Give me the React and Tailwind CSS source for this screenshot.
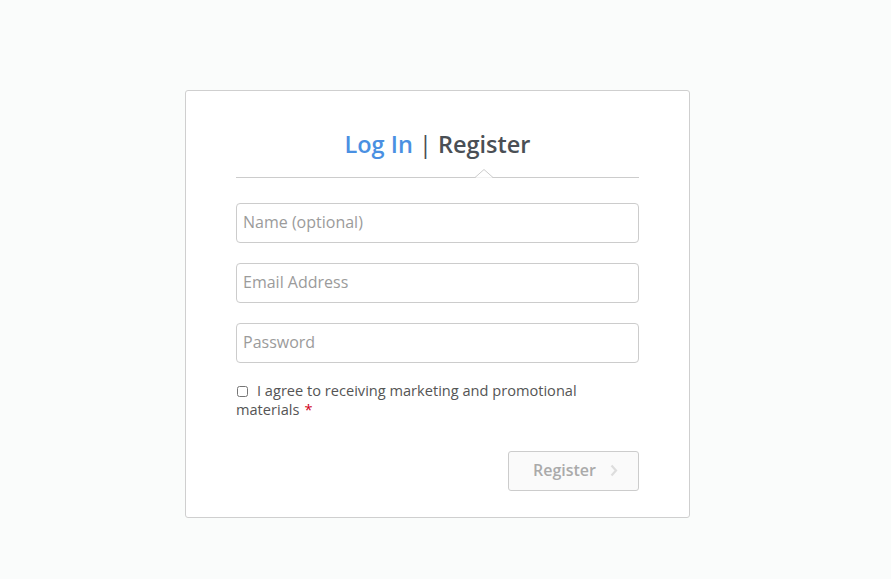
import React from "react";

const font = { fontFamily: "'Open Sans', Lato, sans-serif" };

function Field({ placeholder, type = "text" }) {
  return (
    <input
      type={type}
      placeholder={placeholder}
      className="h-[40px] w-full rounded-[4px] border border-[#cccccc] bg-white px-[6px] pb-[2px] text-[16px] text-[#555] placeholder:text-[#9b9b9b] outline-none"
      style={font}
    />
  );
}

export default function App() {
  return (
    <div className="min-h-screen bg-[#fafcfb] pt-[90px]" style={font}>
      <div className="ml-[185px] w-[505px] rounded-[3px] border border-[#cfcfcf] bg-white px-[50px] pt-[37px] pb-[26px]">
        <h1 className="text-center text-[23.5px] leading-[32px] font-semibold text-[#4a4f55]">
          <span className="text-[#4a90e2]">Log In</span>
          <span className="font-normal"> | </span>
          <span>Register</span>
        </h1>

        {/* divider with little notch under Register */}
        <div className="relative mt-[17px] h-px bg-[#cccccc]">
          <svg
            className="absolute left-[239px] top-[-8px]"
            width="18"
            height="9"
            viewBox="0 0 18 9"
          >
            <path d="M0 8.5 L9 0.5 L18 8.5" fill="white" stroke="#cccccc" strokeWidth="1" />
            <rect x="1" y="8.5" width="16" height="1" fill="white" />
          </svg>
        </div>

        <form className="mt-[25px] flex flex-col gap-[20px]">
          <Field placeholder="Name (optional)" />
          <Field placeholder="Email Address" type="email" />
          <Field placeholder="Password" type="password" />

          <label className="-mt-[2px] block text-[14.6px] leading-[19px] text-[#555]">
            <input
              type="checkbox"
              className="mr-[9px] ml-[1px] inline-block h-[11px] w-[11px] align-[-1px]"
            />
            I agree to receiving marketing and promotional materials
            <span className="ml-[5px] text-[#d0021b]">*</span>
          </label>

          <div className="mt-[12px] flex justify-end">
            <button
              type="button"
              className="flex h-[40px] w-[131px] items-center justify-center gap-[14px] rounded-[3px] border border-[#cccccc] bg-[#fafafa] pl-[4px] pb-[2px] text-[16px] font-semibold text-[#aaaaaa]"
            >
              Register
              <svg width="8" height="13" viewBox="0 0 8 13">
                <path d="M1.5 1.5 L6 6.5 L1.5 11.5" fill="none" stroke="#dddddd" strokeWidth="2.2" />
              </svg>
            </button>
          </div>
        </form>
      </div>
    </div>
  );
}
